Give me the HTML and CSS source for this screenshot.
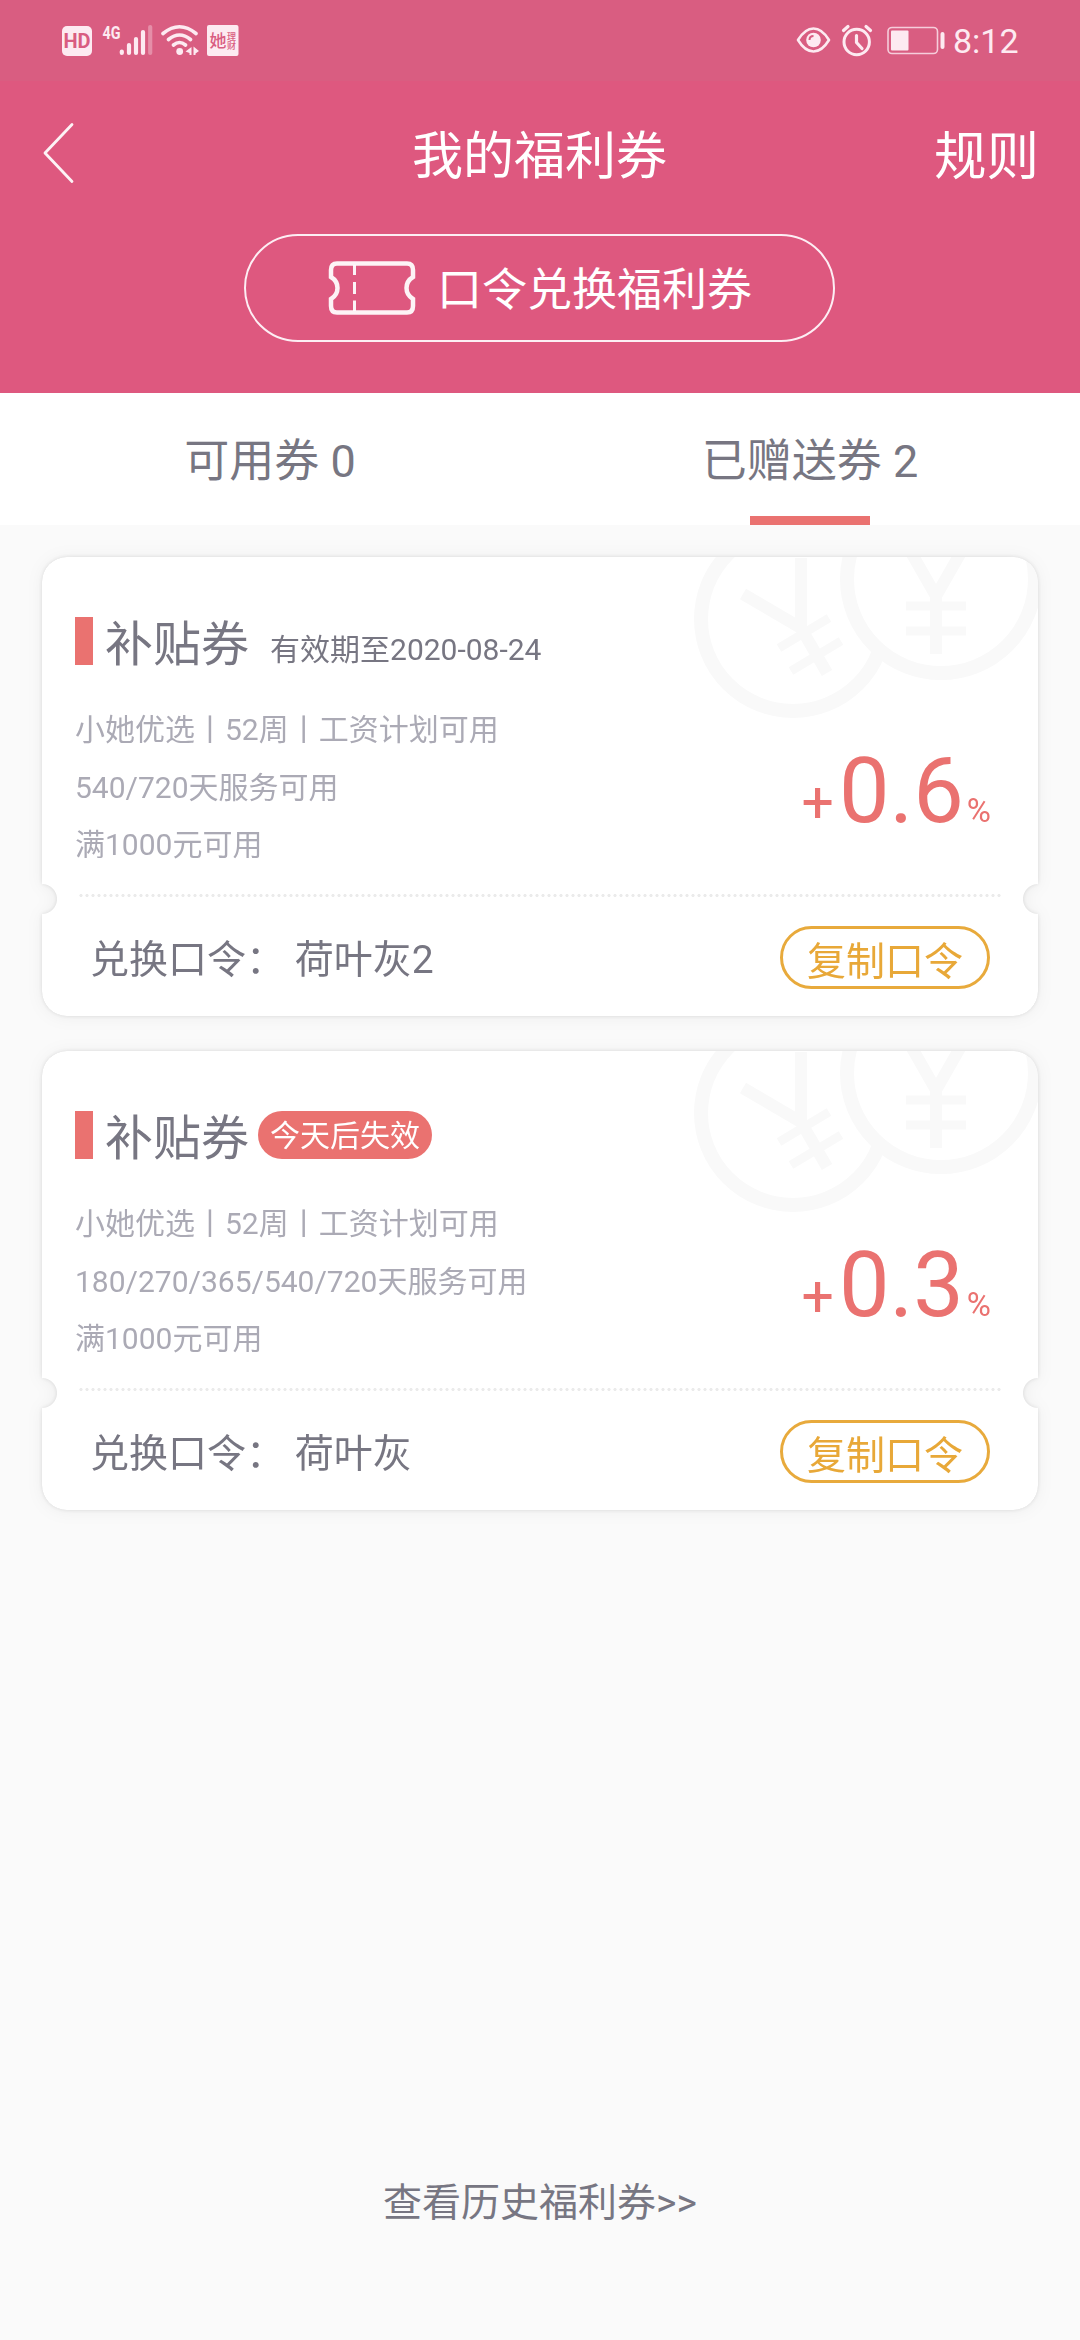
FILE: index.html
```html
<!DOCTYPE html>
<html lang="zh-CN">
<head>
<meta charset="utf-8">
<title>我的福利券</title>
<link rel="stylesheet" href="styles.css">
</head>
<body>
<svg width="0" height="0" class="defs">
  <symbol id="coins" viewBox="0 0 360 170">
    <g fill="none" stroke="#f9f9f9" stroke-width="14">
      <circle cx="115" cy="62" r="92"/>
      <path stroke-width="12" d="M123 1V71L149 116M65 37L123 71"/>
      <path stroke-width="9" d="M101 91L151 61M113 114L163 84"/>
      <circle cx="263" cy="22" r="94" fill="#fff"/>
      <path stroke-width="12" d="M226 -17L258 39L290 -17M258 36V97"/>
      <path stroke-width="9" d="M228 49H288M228 74H288"/>
    </g>
  </symbol>
</svg>
<header class="header">
  <div class="status">
    <div class="status-left">
      <svg width="180" height="36" viewBox="60 22 180 36">
        <rect x="62" y="26" width="30" height="30" rx="5" fill="#fdeaf1"/>
        <text x="77" y="48" class="hd">HD</text>
        <text x="102.500" y="39" class="net" textLength="18" lengthAdjust="spacingAndGlyphs">4G</text>
        <g stroke="#fdeaf1" stroke-width="4.200" stroke-linecap="round" fill="none">
          <path d="M121.800 51.500V53M129 45V53M136 39V53M143 32V53"/>
          <path d="M150.200 27V53" opacity=".35"/>
          <path stroke-width="3.600" d="M163 33.500Q179.500 20 196 33.500M168.500 39.500Q179.500 30.500 190.500 39.500M173.500 45Q179.500 40 185.500 45"/>
        </g>
        <circle cx="179.700" cy="51.500" r="3.400" fill="#fdeaf1"/>
        <path d="M191.500 47V55H189.500V53L185.500 51.500ZM193.500 46.500L199 51L195.500 53.500V55H193.500Z" fill="#fdeaf1"/>
        <rect x="207" y="25" width="31.500" height="31" rx="2" fill="#fdeaf1"/>
        <text x="209.500" y="46.500" class="app-l">她</text>
        <text x="227" y="40" class="app-s">理</text>
        <text x="227" y="48.500" class="app-s">财</text>
      </svg>
    </div>
    <div class="status-right">
      <svg width="150" height="36" viewBox="795 22 150 36">
        <g fill="none" stroke="#fdeaf1" stroke-width="2.600" stroke-linecap="round" stroke-linejoin="round">
          <path d="M797 40Q804 28.500 812.500 28.500T828 40Q821 51.500 812.500 51.500T797 40Z"/>
          <circle cx="855.700" cy="42" r="12.700" stroke-width="3"/>
          <path d="M842.500 30.500L847 26.500M869.500 30.500L865 26.500" stroke-width="3.200"/>
          <path d="M855.500 35.500V42.500L861 48.500" stroke-width="3.200"/>
          <rect x="887" y="27.500" width="49.500" height="26" rx="4" stroke-width="1.600" opacity=".8"/>
        </g>
        <circle cx="812.500" cy="40" r="7.300" fill="#fdeaf1"/>
        <path d="M808.500 40Q808.500 36 812.500 36" stroke="#d95d81" stroke-width="2" fill="none"/>
        <rect x="890" y="30.500" width="17.500" height="20" rx="1" fill="#fdeaf1"/>
        <rect x="939.500" y="32" width="4" height="17" rx="2" fill="#fdeaf1"/>
      </svg>
      <span class="time">8:12</span>
    </div>
  </div>
  <nav class="nav">
    <svg class="back" width="34" height="64" viewBox="0 0 34 64"><path d="M31 3.500L4 32L31 60.500" fill="none" stroke="#fff" stroke-width="2.800" stroke-linecap="round" stroke-linejoin="round" opacity=".93"/></svg>
    <h1 class="title">我的福利券</h1>
    <a class="rules">规则</a>
  </nav>
  <button class="redeem">
    <svg width="88" height="56" viewBox="0 0 88 56">
      <path d="M9 3.500H79Q85 3.500 85 10V17Q78.500 21 78.500 28T85 39V46Q85 52.500 79 52.500H9Q3 52.500 3 46V39Q9.500 35 9.500 28T3 17V10Q3 3.500 9 3.500Z" fill="none" stroke="#fff" stroke-width="4.500" opacity=".93"/>
      <path d="M26.500 5V15M26.500 22V34M26.500 40.500V51" stroke="#fff" stroke-width="3" opacity=".93"/>
    </svg>
    <span class="redeem-label">口令兑换福利券</span>
  </button>
</header>
<div class="tabs">
  <div class="tab">可用券 0</div>
  <div class="tab active">已赠送券 2</div>
</div>
<main class="list">
  <section class="coupon">
    <div class="card">
      <svg class="coins" width="360" height="170"><use href="#coins"/></svg>
      <div class="head"><i class="mark"></i><h2 class="kind">补贴券</h2><span class="expiry">有效期至2020-08-24</span></div>
      <div class="info">
        <ul class="terms"><li>小她优选丨52周丨工资计划可用</li><li>540/720天服务可用</li><li>满1000元可用</li></ul>
        <div class="rate"><span class="plus">+</span><span class="num">0.6</span><span class="pct">%</span></div>
      </div>
      <div class="dots"></div>
      <div class="foot"><span class="code">兑换口令： 荷叶灰2</span><button class="copy">复制口令</button></div>
    </div>
  </section>
  <section class="coupon">
    <div class="card">
      <svg class="coins" width="360" height="170"><use href="#coins"/></svg>
      <div class="head"><i class="mark"></i><h2 class="kind">补贴券</h2><span class="badge">今天后失效</span></div>
      <div class="info">
        <ul class="terms"><li>小她优选丨52周丨工资计划可用</li><li>180/270/365/540/720天服务可用</li><li>满1000元可用</li></ul>
        <div class="rate"><span class="plus">+</span><span class="num">0.3</span><span class="pct">%</span></div>
      </div>
      <div class="dots"></div>
      <div class="foot"><span class="code">兑换口令： 荷叶灰</span><button class="copy">复制口令</button></div>
    </div>
  </section>
</main>
<a class="history">查看历史福利券&gt;&gt;</a>
</body>
</html>
```
FILE: styles.css
```css
* { box-sizing: border-box; margin: 0; padding: 0; }
body {
  width: 1080px;
  height: 2340px;
  display: flex;
  flex-direction: column;
  background: #fafafa;
  color: #777682;
  font-family: Roboto, "Noto Sans CJK SC", sans-serif;
}
.defs { position: absolute; }
button { font: inherit; background: none; }
h1, h2 { font-weight: 400; }

.header { height: 393px; background: #de587f; color: #fff; }
.status {
  height: 81px;
  padding: 0 61px 0 60px;
  display: flex;
  justify-content: space-between;
  background: #d95d81;
}
.status-left { padding-top: 22px; }
.status-right { display: flex; gap: 7px; padding-top: 22px; }
.time { font-size: 34px; line-height: 38px; color: #fdeaf1; width: 66px; white-space: nowrap; }
.hd { font: 700 20px Roboto, sans-serif; fill: #d95d81; text-anchor: middle; }
.net { font: 700 19px Roboto, sans-serif; fill: #fdeaf1; }
.app-l { font: 500 17px "Noto Sans CJK SC", sans-serif; fill: #d95d81; }
.app-s { font: 500 9px "Noto Sans CJK SC", sans-serif; fill: #d95d81; }

.nav {
  height: 153px;
  padding: 0 42px 9px 41px;
  display: grid;
  grid-template-columns: 1fr auto 1fr;
  align-items: center;
}
.title { font-size: 51px; line-height: 60px; padding-top: 8px; }
.rules { font-size: 52.500px; line-height: 60px; padding-top: 8px; justify-self: end; margin-right: -1px; }
.redeem {
  width: 591px;
  height: 108px;
  margin: 0 auto 0 244px;
  padding-left: 82px;
  display: flex;
  align-items: center;
  gap: 21px;
  border: 2px solid #fdeef4;
  border-radius: 54px;
  color: #fff;
  font-size: 45px;
  line-height: 56px;
}
.redeem-label { padding-top: 6px; }

.tabs { display: grid; grid-template-columns: 1fr 1fr; height: 132px; background: #fff; }
.tab { font-size: 45px; line-height: 138px; text-align: center; position: relative; height: 132px; }
.tab.active::after {
  content: "";
  position: absolute;
  left: 210px;
  bottom: 0;
  width: 120px;
  height: 9px;
  background: #ea7270;
}

.list { padding: 32px 42px 0; display: flex; flex-direction: column; gap: 35px; }
.coupon { filter: drop-shadow(0 0 2px rgba(0,0,0,.11)) drop-shadow(0 1px 8px rgba(0,0,0,.05)); }
.card {
  position: relative;
  height: 459px;
  border-radius: 25px;
  background: #fff;
  overflow: hidden;
  -webkit-mask: radial-gradient(circle at 0 342px, transparent 14.500px, #000 15.500px), radial-gradient(circle at 100% 342px, transparent 14.500px, #000 15.500px);
  -webkit-mask-composite: source-in;
  mask-composite: intersect;
}
.coins { position: absolute; top: 0; left: 636px; }
.head { height: 108px; padding: 60px 33px 0; display: flex; align-items: flex-start; position: relative; }
.mark { width: 18px; height: 48px; background: #ea7270; }
.kind { font-size: 48px; line-height: 56px; margin-left: 12px; }
.expiry { font-size: 30px; line-height: 48px; margin: 9px 0 0 21px; }
.badge {
  height: 48px;
  margin-left: 9px;
  padding: 0 12px;
  border-radius: 24px;
  background: #ea7270;
  color: #fff;
  font-size: 30px;
  line-height: 50px;
}
.info { height: 229px; padding: 36px 47px 0 33px; display: flex; justify-content: space-between; }
.terms { list-style: none; font-size: 30px; line-height: 57px; color: #abaab5; }
.terms li:nth-child(2) { line-height: 60px; }
.terms li:nth-child(3) { line-height: 54px; }
.rate { display: flex; align-items: baseline; color: #ea7270; line-height: 106px; padding-top: 38px; }
.plus { font-size: 57px; }
.num { font-size: 90px; margin-left: 5px; }
.pct { font-size: 33px; margin-left: 3px; }
.dots {
  height: 3px;
  margin: 0 36px;
  background: radial-gradient(circle, #ebebeb 1.300px, transparent 1.900px) 0 0 / 6px 3px repeat-x;
}
.foot { height: 119px; padding: 29px 48px 0; display: flex; align-items: flex-start; justify-content: space-between; }
.code { font-size: 39px; line-height: 69px; white-space: pre; }
.copy {
  width: 210px;
  height: 63px;
  padding-top: 5px;
  border: 3px solid #e8aa3c;
  border-radius: 32px;
  color: #e8a838;
  font-size: 39px;
  line-height: 57px;
}
.history { margin: auto auto 0; padding-bottom: 111px; font-size: 39px; line-height: 52px; }
```
